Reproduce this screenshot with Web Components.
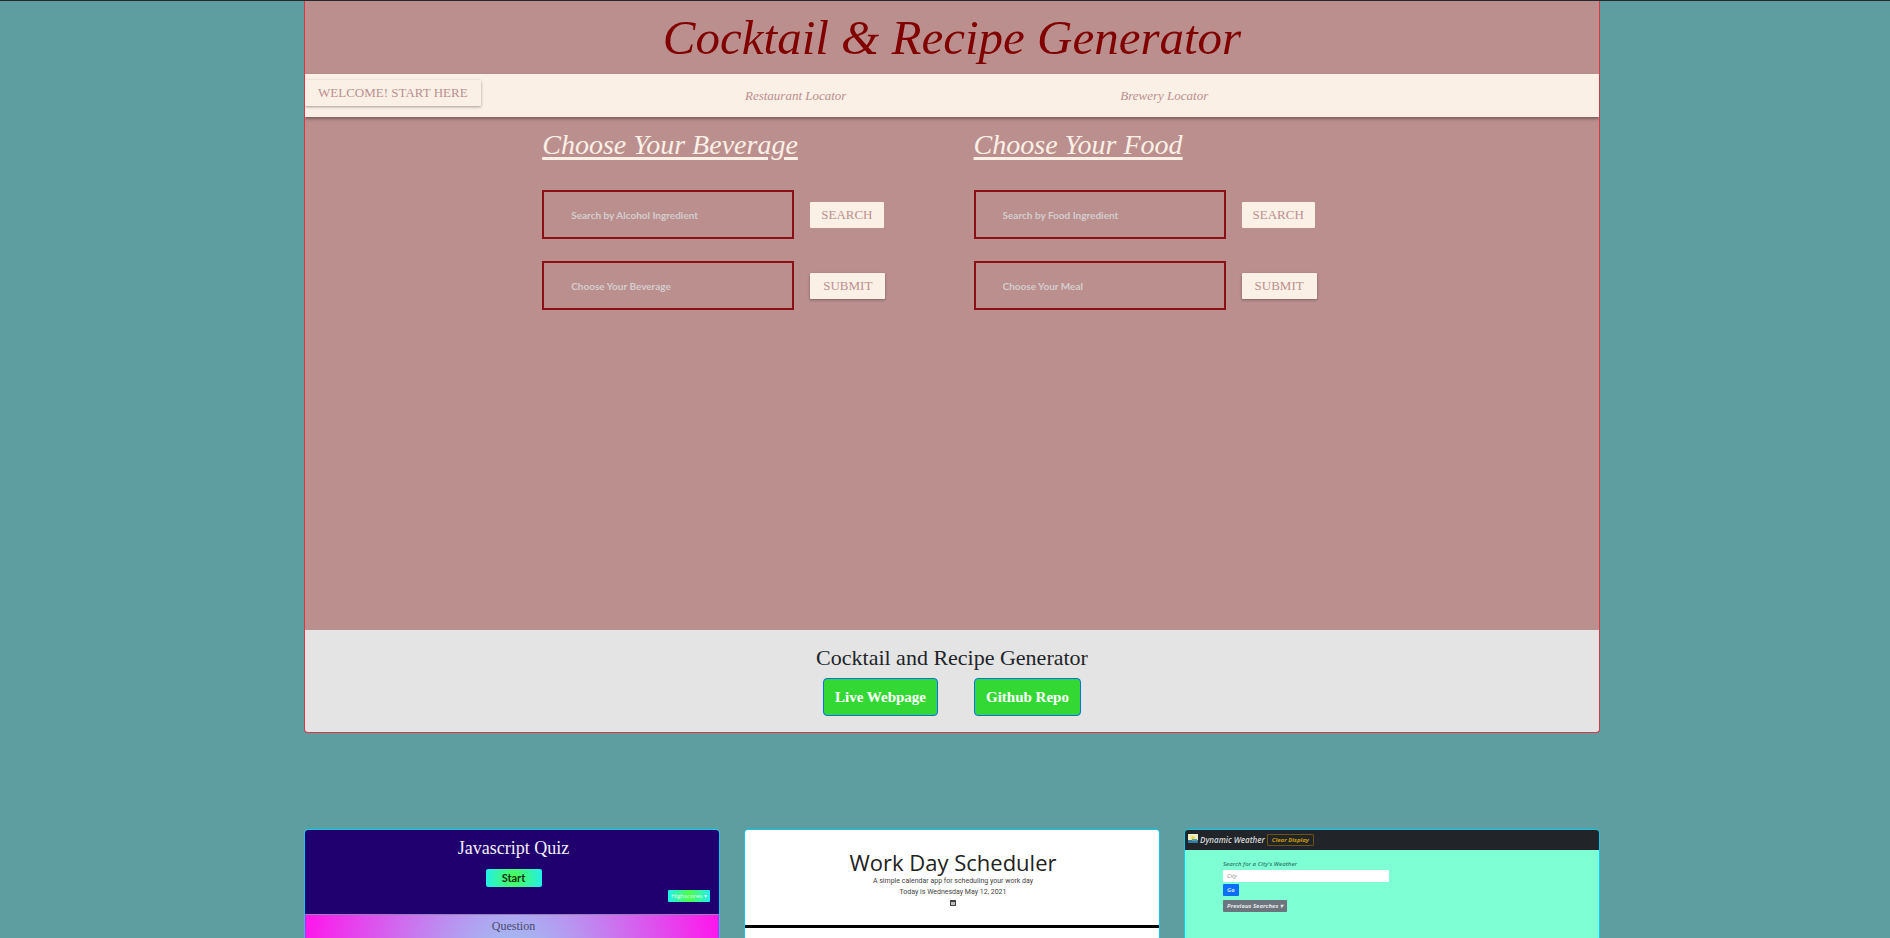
<!DOCTYPE html>
<html lang="en">
<head>
<meta charset="utf-8">
<title>Portfolio</title>
<style>
html { background: #5f9ea0; }
body { margin: 0; height: 100vh; overflow: hidden; font-family: "Liberation Serif", serif; color: #212529; }
</style>
</head>
<body>
<portfolio-page>
  <project-card slot="feature">
    <recipe-demo></recipe-demo>
    <span slot="title">Cocktail and Recipe Generator</span>
  </project-card>
  <project-tile><quiz-demo></quiz-demo></project-tile>
  <project-tile><scheduler-demo></scheduler-demo></project-tile>
  <project-tile><weather-demo></weather-demo></project-tile>
</portfolio-page>
<script>
function define(name, html) {
  const template = document.createElement('template');
  template.innerHTML = '<style>*{box-sizing:border-box}h1,h2,h3,p{margin:0;font-weight:400}a{text-decoration:none}button,input,select{font:inherit;margin:0}</style>' + html;
  customElements.define(name, class extends HTMLElement {
    constructor() {
      super();
      this.attachShadow({ mode: 'open' }).append(template.content.cloneNode(true));
      const label = this.shadowRoot.querySelector('[data-label]');
      if (label && this.hasAttribute('label')) {
        const text = this.getAttribute('label');
        label.setAttribute('aria-label', text);
        if (label.tagName === 'SELECT') label.add(new Option(text));
        else label.placeholder = text;
      }
    }
  });
}

define('portfolio-page', `
<style>
:host { display: block; border-top: 1px solid #24292b; padding-left: 14px; }
main { max-width: 1296px; margin: 0 auto; }
.tiles { display: grid; grid-template-columns: repeat(3, 1fr); gap: 24px; margin-top: 96px; }
</style>
<main><slot name="feature"></slot><section class="tiles"><slot></slot></section></main>`);

define('project-card', `
<style>
:host { display: block; background: #e4e4e4; border: 1px solid #dc3545; border-top: 0; border-radius: 0 0 4px 4px; overflow: hidden; }
footer { padding: 16px; text-align: center; }
h2 { font-size: 22px; line-height: 24px; margin-bottom: 8px; }
nav { display: flex; justify-content: center; gap: 36px; }
a { height: 38px; padding: 0 11px; border: 1px solid #0d6efd; border-radius: 4px; background: #34d834; color: #fff; font-size: 15px; line-height: 36px; font-weight: 700; }
</style>
<slot></slot>
<footer><h2><slot name="title"></slot></h2>
<nav><a href="#live">Live Webpage</a><a href="#repo">Github Repo</a></nav></footer>`);

define('project-tile', `
<style>
:host { display: block; border: 1px solid #0dcaf0; border-radius: 4px; overflow: hidden; background: #fff; }
</style><slot></slot>`);

define('recipe-button', `
<style>
:host { display: block; }
button { display: block; border: 0; border-radius: 1px; height: 26px; padding: 0 11px; background: #faf0e6; color: #bc8f8f; font-size: 13px; line-height: 26px; white-space: nowrap; }
:host([raised]) button { padding: 0 13px; box-shadow: 0 1px 3px rgba(0,0,0,.35); }
</style><button type="button"><slot></slot></button>`);

const fieldStyle = `
:host { display: block; width: 252px; height: 49px; }
input, select { display: block; width: 100%; height: 100%; padding: 0 27px; border: 2px solid #8b1016; border-radius: 0; background: transparent; appearance: none; color: #d3cdcd; font: 700 10px Lato, sans-serif; outline: 0; }
::placeholder { color: #d3cdcd; opacity: 1; }`;
define('recipe-input', `<style>${fieldStyle}</style><input type="text" data-label>`);
define('recipe-select', `<style>${fieldStyle}</style><select data-label></select>`);

define('recipe-form', `
<style>
:host { display: block; }
h2 { color: #faf0e6; font-size: 28px; line-height: 36px; font-style: italic; text-decoration: underline; text-decoration-thickness: 3px; text-underline-offset: 3px; margin-bottom: 27px; white-space: nowrap; }
form { display: grid; grid-template-columns: max-content max-content; gap: 22px 16px; align-items: center; }
</style>
<h2><slot name="title"></slot></h2><form><slot></slot></form>`);

define('recipe-demo', `
<style>
:host { display: block; background: #bc8f8f; }
h1 { color: #800000; font-size: 49px; line-height: 73px; font-style: italic; text-align: center; }
nav { display: grid; grid-template-columns: 34fr 29fr 37fr; align-items: center; height: 43px; background: #faf0e6; box-shadow: 0 2px 3px rgba(0,0,0,.35); }
recipe-button { align-self: start; justify-self: start; margin-top: 6px; }
nav a { color: #bc8f8f; font-size: 13px; line-height: 20px; font-style: italic; }
.forms { display: grid; grid-template-columns: 11fr 20fr 29fr; min-height: 513px; padding-top: 10px; }
.forms recipe-form:first-child { grid-column: 2; }
.forms recipe-button { align-self: center; margin: 0; }
</style>
<h1>Cocktail &amp; Recipe Generator</h1>
<nav><recipe-button raised>WELCOME! START HERE</recipe-button><a href="#restaurants">Restaurant Locator</a><a href="#breweries">Brewery Locator</a></nav>
<div class="forms">
  <recipe-form><span slot="title">Choose Your Beverage</span>
    <recipe-input label="Search by Alcohol Ingredient"></recipe-input><recipe-button>SEARCH</recipe-button>
    <recipe-select label="Choose Your Beverage"></recipe-select><recipe-button raised>SUBMIT</recipe-button>
  </recipe-form>
  <recipe-form><span slot="title">Choose Your Food</span>
    <recipe-input label="Search by Food Ingredient"></recipe-input><recipe-button>SEARCH</recipe-button>
    <recipe-select label="Choose Your Meal"></recipe-select><recipe-button raised>SUBMIT</recipe-button>
  </recipe-form>
</div>`);

define('quiz-demo', `
<style>
:host { display: block; }
header { display: flex; flex-direction: column; align-items: center; height: 84px; padding: 6px 0 0 3px; background: #20006e; }
h3 { color: #f4f0fa; font-size: 18px; line-height: 24px; }
button { border: 0; border-radius: 2px; padding: 0; background: radial-gradient(circle, #4dff4d, #22eeee); }
.start { width: 56px; height: 18px; margin-top: 9px; color: #10301c; font: 700 11px/18px Lato, sans-serif; }
.scores { align-self: flex-end; width: 42px; height: 12px; margin: 3px 9px 0 0; color: #e8fff4; font: 6px/12px "Open Sans", sans-serif; border-radius: 1px; background: linear-gradient(90deg, #22eeee, #4dff4d, #22eeee); }
section { height: 200px; padding: 3px 0 0 3px; border-top: 1px solid #9a7fc0; text-align: center; background: radial-gradient(ellipse 52% 180% at 50% 50%, #8fe0f3, #ff14eb); color: #4b4a70; }
p { font-size: 12px; line-height: 16px; }
</style>
<header><h3>Javascript Quiz</h3><button class="start" type="button">Start</button><button class="scores" type="button">Highscores ▾</button></header>
<section><p>Question</p></section>`);

define('scheduler-demo', `
<style>
:host { display: block; height: 285px; background: #fff; color: #222; font-family: "Open Sans", sans-serif; text-align: center; }
header { display: flex; flex-direction: column; align-items: center; height: 98px; padding: 18px 0 0 2px; border-bottom: 3px solid #000; }
h3 { font-size: 22px; line-height: 28px; }
p { font: 7px/11px Roboto, sans-serif; color: #444; }
svg { display: block; margin-top: 2px; }
</style>
<header><h3>Work Day Scheduler</h3><p>A simple calendar app for scheduling your work day</p><p>Today is Wednesday May 12, 2021</p>
<svg width="6" height="6" viewBox="0 0 6 6" aria-hidden="true"><path d="M0 0h6v6H0z" fill="#444"/><path d="M1 2h4v3H1z" fill="#bbb"/></svg></header>`);

define('weather-demo', `
<style>
:host { display: block; height: 285px; background: #7fffd4; font: italic 700 6px/12px "Open Sans", sans-serif; }
header { display: flex; align-items: center; gap: 2px; height: 20px; padding-left: 3px; background: #212529; }
.logo { margin-bottom: 4px; }
h3 { color: #d8d8d8; font-size: 8px; line-height: 20px; font-weight: 600; }
button { display: block; height: 12px; padding: 0 4px; border: 0; border-radius: 1px; white-space: nowrap; }
.clear { border: 1px solid #6b5310; background: transparent; color: #c99a0c; line-height: 10px; }
form { padding: 8px 0 0 38px; width: 204px; }
label { display: block; color: #2e7a66; font-weight: 600; }
input { display: block; width: 166px; height: 12px; padding: 0 4px; border: 0; border-radius: 1px; background: #fff; }
::placeholder { color: #888; opacity: 1; font-weight: 400; }
.go { margin: 2px 0 4px; background: #0d6efd; color: #cfe4ff; }
.prev { background: #6c757d; color: #e4e6e8; }
</style>
<header><svg class="logo" width="10" height="9" viewBox="0 0 10 9" aria-hidden="true"><path d="M0 0h10v9H0z" fill="#e9efc8"/><path d="M0 6h10v3H0z" fill="#347a9e"/><circle cx="5" cy="4" r="2" fill="#f4d83c"/><path d="M4 5h5v2H4z" fill="#5b9cb0"/></svg>
<h3>Dynamic Weather</h3><button class="clear" type="button">Clear Display</button></header>
<form><label for="city">Search for a City's Weather</label><input id="city" type="text" placeholder="City"><button class="go" type="button">Go</button><button class="prev" type="button">Previous Searches ▾</button></form>`);
</script>
</body>
</html>
